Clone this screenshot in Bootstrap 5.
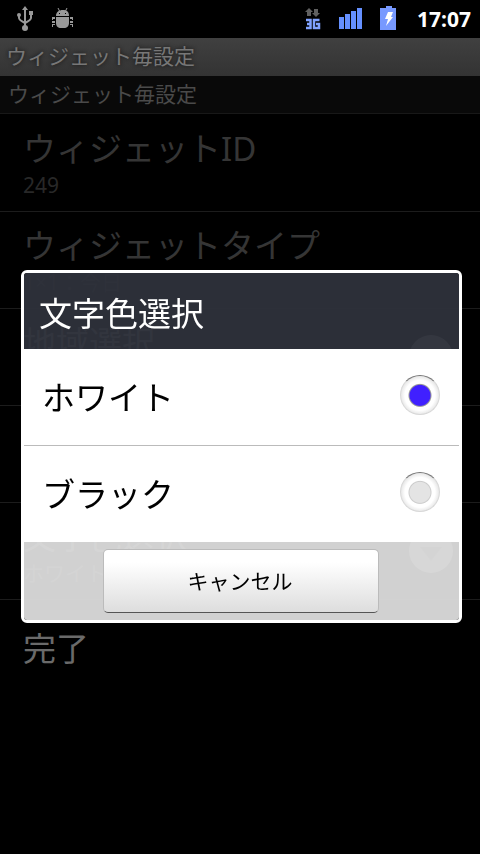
<!DOCTYPE html>
<html lang="ja">
<head>
<meta charset="utf-8">
<meta name="viewport" content="width=device-width, initial-scale=1">
<title>ウィジェット毎設定</title>
<link href="https://cdn.jsdelivr.net/npm/bootstrap@5.3.0/dist/css/bootstrap.min.css" rel="stylesheet">
<style>
  body { background: #000; color: #666; font-family: "Noto Sans", "Noto Sans CJK JP", sans-serif; font-size: 21px; line-height: 28px; }
  .status-bar { min-height: 38px; padding: 0 9px 0 14px; background: #000; }
  .clock { color: #fff; font-weight: 700; font-size: 21px; }
  .title-bar { min-height: 38px; padding: 0 7px 2px 6px; background: linear-gradient(#404040, #333); color: #777; text-shadow: 0 0 4px #111; font-size: 21px; line-height: 28px; }
  .category { min-height: 38px; padding: 0 8px 2px; background: #090909; color: #4a4a4a; border-bottom: 1px solid #181818; font-size: 21px; line-height: 28px; }
  .pref-list { padding-top: 1px; }
  .pref { --bs-list-group-bg: transparent; --bs-list-group-color: #6a6a6a; min-height: 97px; padding: 0 27px 0 23px; border: 0; border-bottom: 1px solid #1c1c1c; }
  .pref-title { font-size: 33px; line-height: 44px; }
  .pref-summary { font-size: 21px; line-height: 28px; color: #555; }
  .pref.disabled { color: #353535; background: transparent; }
  .pref.disabled .pref-summary { color: #282828; }
  .dialog-layer { --bs-modal-margin: 0px; --bs-modal-width: 640px; top: 38px; height: calc(100% - 38px); padding: 0 18px 0 21px; }
  .dialog-box { --bs-modal-bg: transparent; --bs-modal-border-width: 3px; --bs-modal-border-color: #fff; --bs-modal-border-radius: 6px; color: #000; }
  .dialog-head { min-height: 76px; padding: 6px 15px 0; border: 0; border-radius: 3px 3px 0 0; background: rgba(47, 50, 59, .94); }
  .dialog-title { color: #fff; font-size: 33px; line-height: 44px; font-weight: 400; }
  .choice { min-height: 96px; padding: 0 19px 4px 18px; background: #fff; font-size: 33px; line-height: 44px; color: #000; }
  .choice label { padding-top: 6px; }
  .choice + .choice { border-top: 1px solid #bbb; min-height: 97px; }
  .choice .form-check-input { width: 40px; height: 40px; margin: 0; border: 1px solid #d8d8d8; border-top-color: #777; background: radial-gradient(circle at 50% 51%, #e4e4e4 10px, #ccc 11px, #fff 12px, #fff 15px, #e2e2e2 20px); }
  .choice .form-check-input:checked { border-color: #d8d8d8; border-top-color: #777; background: radial-gradient(circle at 50% 51%, #4020ff 10px, #999 11px, #fff 12px, #fff 15px, #e2e2e2 20px); }
  .dialog-foot { min-height: 78px; padding: 7px 80px 7px 79px; background: rgba(218, 218, 218, .955); border: 0; border-radius: 0 0 3px 3px; }
  .btn-cancel { min-height: 64px; padding: 0 12px 0 10px; border: 1px solid #bbb; border-bottom-color: #555; border-radius: 5px; background: linear-gradient(#fff 20%, #ddd); font-size: 21px; line-height: 28px; color: #000; }
</style>
</head>
<body>
<header class="status-bar d-flex align-items-center justify-content-between">
  <div class="d-flex align-items-center gap-3">
    <svg width="22" height="28" viewBox="0 0 22 28" fill="none" stroke="#999" stroke-width="2" aria-label="USB">
      <path d="M11 5v18M5 10v3q0 2 6 5M17 9v4q0 2-6 5"/>
      <path d="M11 1l3 4H8z" fill="#999" stroke="none"/>
      <circle cx="11" cy="23" r="3" fill="#999" stroke="none"/>
      <circle cx="5" cy="10" r="2" fill="#999" stroke="none"/>
      <path d="M15 6h4v4h-4z" fill="#999" stroke="none"/>
    </svg>
    <svg width="22" height="22" viewBox="0 1 22 22" fill="#999" aria-label="デバッグ">
      <path d="M4 9c0-4 3-6 7-6s6 2 6 6zM4 10h13v6c0 3-2 5-5 5H9c-3 0-5-2-5-5z"/>
      <path d="M7.500 4L6 1M13.500 4L15 1" fill="none" stroke="#999"/>
      <path d="M0 10h3v2H1v1H0zM0 14h3v2H0zM0 17h3v1H1v2H0zM18 10h3v3h-1v-1h-2zM18 14h3v2h-3zM18 17h3v3h-1v-2h-2z"/>
      <path d="M7 6h1v1H7zM13 6h1v1h-1z" fill="#000"/>
    </svg>
  </div>
  <div class="d-flex align-items-center gap-3">
    <svg width="18" height="24" viewBox="-1 0 18 24" aria-label="3G">
      <path d="M5 1l4 4H7v4H3V5H1zM12 10l-4-4h2V2h4v4h2z" fill="#606060"/>
      <path d="M2 13h4.500v8H2M3 17h3M15.500 13H10v8h5v-4h-3" fill="none" stroke="#80a2ff" stroke-width="2.500"/>
    </svg>
    <svg width="26" height="24" viewBox="-1 1 26 24" fill="#6590ff" aria-label="電波">
      <path d="M1 11h5v12H1zM7 8h5v15H7zM13 5h5v18h-5zM19 2h5v21h-5z"/>
    </svg>
    <svg width="18" height="26" viewBox="-1 1 18 26" aria-label="充電中">
      <path d="M6 1h6v2h4v22H0V3h6z" fill="#7799ff"/>
      <path d="M8 7h5l-2 5h2l-7 9 2-7H5z" fill="#fff"/>
    </svg>
    <span class="clock ms-1">17:07</span>
  </div>
</header>
<main>
  <h1 class="title-bar d-flex align-items-center m-0 fw-normal">ウィジェット毎設定</h1>
  <h2 class="category d-flex align-items-center m-0 fw-normal">ウィジェット毎設定</h2>
  <div class="pref-list list-group list-group-flush">
    <div class="pref disabled list-group-item d-flex flex-column justify-content-center">
      <span class="pref-title">ウィジェットID</span><span class="pref-summary">249</span>
    </div>
    <div class="pref disabled list-group-item d-flex flex-column justify-content-center">
      <span class="pref-title">ウィジェットタイプ</span><span class="pref-summary">1×1：今日</span>
    </div>
    <div class="pref list-group-item d-flex align-items-center justify-content-between">
      <div class="d-flex flex-column"><span class="pref-title">地域選択</span><span class="pref-summary">&nbsp;</span></div>
      <svg width="44" height="44" viewBox="0 0 44 44" aria-hidden="true"><circle cx="22" cy="22" r="22" fill="#888"/><path d="M11 18h22L22 32z" fill="#555"/></svg>
    </div>
    <div class="pref list-group-item"></div>
    <div class="pref list-group-item d-flex align-items-center justify-content-between">
      <div class="d-flex flex-column"><span class="pref-title">文字色選択</span><span class="pref-summary">ホワイト</span></div>
      <svg width="44" height="44" viewBox="0 0 44 44" aria-hidden="true"><circle cx="22" cy="22" r="22" fill="#888"/><path d="M11 18h22L22 32z" fill="#555"/></svg>
    </div>
    <div class="pref list-group-item d-flex align-items-center"><span class="pref-title">完了</span></div>
  </div>
</main>
<div class="dialog-layer modal d-block" role="dialog" aria-labelledby="dialogTitle">
  <div class="modal-dialog modal-dialog-centered">
    <form class="dialog-box modal-content">
      <div class="dialog-head modal-header"><h3 class="dialog-title m-0" id="dialogTitle">文字色選択</h3></div>
      <div class="modal-body p-0">
        <div class="choice d-flex align-items-center justify-content-between">
          <label class="flex-grow-1" for="white">ホワイト</label>
          <input class="form-check-input" type="radio" name="color" id="white" checked>
        </div>
        <div class="choice d-flex align-items-center justify-content-between">
          <label class="flex-grow-1" for="black">ブラック</label>
          <input class="form-check-input" type="radio" name="color" id="black">
        </div>
      </div>
      <div class="dialog-foot modal-footer align-items-start"><button type="button" class="btn btn-cancel w-100 m-0">キャンセル</button></div>
    </form>
  </div>
</div>
<script src="https://cdn.jsdelivr.net/npm/bootstrap@5.3.0/dist/js/bootstrap.bundle.min.js"></script>
</body>
</html>
